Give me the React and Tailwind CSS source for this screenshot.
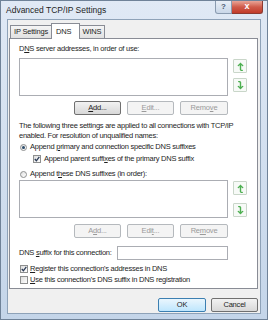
import React from 'react'

const font = { fontFamily: '"Liberation Sans", Arial, sans-serif' }

const Btn = ({ children, disabled, primary, w = 'w-[47px]' }) => (
  <div
    className={`${w} h-[14px] flex items-center justify-center rounded-[2px] border text-[7.5px] tracking-[-0.2px] ${
      disabled
        ? 'border-[#b5b9bd] bg-[#f4f4f4] text-[#9a9a9a]'
        : primary
        ? 'border-[#3c7fb1] bg-gradient-to-b from-[#eaf6fd] to-[#bee6fd] text-[#1e1e1e]'
        : 'border-[#707070] bg-gradient-to-b from-[#f2f2f2] to-[#d8d8d8] text-[#1e1e1e]'
    }`}
  >
    {children}
  </div>
)

const Arrow = ({ down }) => (
  <div className="w-[14px] h-[14px] flex items-center justify-center border border-[#c9d6c9] bg-[#f7faf7] rounded-[1px]">
    <svg width="7" height="9" viewBox="0 0 8 10" className={down ? 'rotate-180' : ''}>
      <path d="M4 8.5 V1.5 M1.5 4 L4 1.5 L6.5 4 M4 8.5 Q4.2 9.5 6 9.5" stroke="#4caf50" strokeWidth="1.6" fill="none" strokeLinecap="round" />
    </svg>
  </div>
)

const Radio = ({ on }) => (
  <div className="w-[7px] h-[7px] rounded-full border border-[#8e8f8f] bg-gradient-to-br from-[#e0e0e0] to-[#ffffff] flex items-center justify-center shrink-0">
    {on && <div className="w-[3px] h-[3px] rounded-full bg-[#2b4b6b]" />}
  </div>
)

const Check = ({ on }) => (
  <div className="w-[8px] h-[8px] border border-[#8e8f8f] bg-gradient-to-br from-[#dcdcdc] to-[#ffffff] flex items-center justify-center shrink-0">
    {on && (
      <svg width="6" height="6" viewBox="0 0 6 6">
        <path d="M0.8 3 L2.4 4.8 L5.3 0.8" stroke="#2a3a55" strokeWidth="1.3" fill="none" />
      </svg>
    )}
  </div>
)

const App = () => {
  return (
    <div style={font} className="w-[268px] h-[320px] flex flex-col bg-gradient-to-b from-[#e0e9f5] to-[#c4d5e9] border border-[#6f8298] text-[#1e1e1e] overflow-hidden">
      {/* title bar */}
      <div className="h-[18px] flex items-start justify-between shrink-0">
        <div className="pl-[5px] pt-[4px] text-[8.5px] leading-[10px] text-[#1e1e1e] whitespace-nowrap">Advanced TCP/IP Settings</div>
        <div className="flex mr-[4px]">
          <div className="w-[17px] h-[13px] rounded-bl-[3px] border border-t-0 border-[#8a9bb0] bg-gradient-to-b from-[#e8eef6] to-[#c9d7e8] flex items-center justify-center text-[8px] text-[#4a5a70] font-bold">?</div>
          <div className="w-[31px] h-[13px] rounded-br-[3px] border border-t-0 border-l-0 border-[#8d3b32] bg-gradient-to-b from-[#e8a497] via-[#cf5b4a] to-[#c13b2a] flex items-center justify-center text-[9px] text-white font-bold">x</div>
        </div>
      </div>

      {/* client */}
      <div className="mx-[6px] mb-[5px] flex-1 bg-[#f0f0f0] border border-[#8ea2b8] flex flex-col">
        {/* tabs */}
        <div className="h-[18px] flex items-end pl-[2px] shrink-0 text-[7.5px] tracking-[-0.2px] whitespace-nowrap">
          <div className="h-[13px] w-[42px] flex items-center justify-center border border-b-0 border-[#898c95] bg-gradient-to-b from-[#f5f5f5] to-[#e1e1e1]">IP Settings</div>
          <div className="h-[16px] w-[29px] pl-[4px] pt-[2px] border border-b-0 border-[#898c95] bg-white relative top-[1px] -ml-[1px]">DNS</div>
          <div className="h-[13px] w-[25px] flex items-center justify-center border border-b-0 border-l-0 border-[#898c95] bg-gradient-to-b from-[#f5f5f5] to-[#e1e1e1]">WINS</div>
        </div>

        {/* panel */}
        <div className="ml-[1px] w-[249px] h-[251px] border border-[#898c95] bg-white pl-[9px] flex flex-col text-[7.5px] tracking-[-0.25px] leading-[10px] shrink-0 whitespace-nowrap">
          <div className="mt-[5px]">D<u>N</u>S server addresses, in order of use:</div>
          <div className="mt-[4px] flex">
            <div className="w-[209px] h-[38px] border border-[#abadb3]" />
            <div className="ml-[5px] mt-[1px] flex flex-col gap-[5px]">
              <Arrow />
              <Arrow down />
            </div>
          </div>
          <div className="mt-[5px] w-[209px] flex justify-end gap-[6px]">
            <Btn><u>A</u>dd...</Btn>
            <Btn disabled><u>E</u>dit...</Btn>
            <Btn disabled w="w-[48px]">Remo<u>v</u>e</Btn>
          </div>
          <div className="mt-[6px]">The following three settings are applied to all connections with TCP/IP</div>
          <div>enabled. For resolution of unqualified names:</div>
          <div className="mt-[1px] h-[10px] flex items-center gap-[3px] pl-[1px]">
            <Radio on />
            <span>Append <u>p</u>rimary and connection specific DNS suffixes</span>
          </div>
          <div className="mt-[2px] h-[10px] flex items-center gap-[3px] pl-[14px]">
            <Check on />
            <span>Append parent suffi<u>x</u>es of the primary DNS suffix</span>
          </div>
          <div className="mt-[5px] h-[10px] flex items-center gap-[3px] pl-[1px]">
            <Radio />
            <span>Append t<u>h</u>ese DNS suffixes (in order):</span>
          </div>
          <div className="mt-[1px] flex">
            <div className="w-[209px] h-[38px] border border-[#abadb3]" />
            <div className="ml-[5px] mt-[1px] flex flex-col gap-[8px]">
              <Arrow />
              <Arrow down />
            </div>
          </div>
          <div className="mt-[6px] w-[209px] flex justify-end gap-[6px]">
            <Btn disabled>A<u>d</u>d...</Btn>
            <Btn disabled>Edi<u>t</u>...</Btn>
            <Btn disabled w="w-[48px]">Re<u>m</u>ove</Btn>
          </div>
          <div className="mt-[8px] flex items-center">
            <span className="w-[98px]">DNS <u>s</u>uffix for this connection:</span>
            <div className="w-[111px] h-[14px] border border-[#abadb3]" />
          </div>
          <div className="mt-[4px] h-[10px] flex items-center gap-[2px] pl-[1px]">
            <Check on />
            <span><u>R</u>egister this connection's addresses in DNS</span>
          </div>
          <div className="mt-[1px] h-[10px] flex items-center gap-[2px] pl-[1px]">
            <Check />
            <span><u>U</u>se this connection's DNS suffix in DNS registration</span>
          </div>
        </div>

        {/* footer */}
        <div className="flex justify-end gap-[5px] pr-[2px] mt-[9px]">
          <Btn primary w="w-[48px]">OK</Btn>
          <Btn w="w-[47px]">Cancel</Btn>
        </div>
      </div>
    </div>
  )
}

export default App
